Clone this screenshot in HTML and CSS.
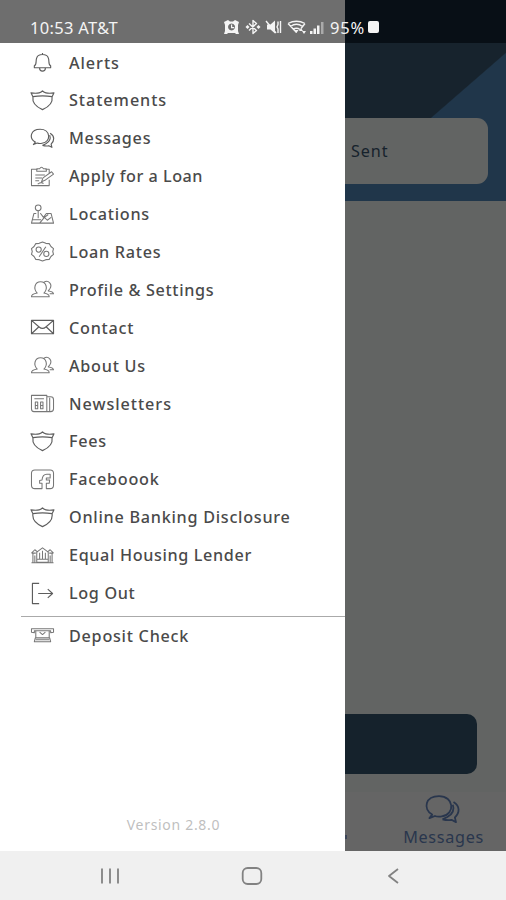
FILE: index.html
```html
<!DOCTYPE html>
<html lang="en">
<head>
    <meta charset="UTF-8">
    <meta name="viewport" content="width=device-width, initial-scale=1.0">
    <title>Mobile Banking</title>
    <link rel="stylesheet" href="styles.css">
</head>
<body>
    <!--shared icon shapes-->
    <svg class="icon-defs">
        <symbol id="shield" viewBox="0 0 26 24">
            <path d="M1 4q5 .8 8.500 0Q12 3.500 13 2q1 1.500 3.500 2Q20 4.800 25 4l-2 4c1 7-4 11-10 13.500C7 19 2 15 3 8zM3 8q10-1.500 20 0"/>
        </symbol>
        <symbol id="chat" viewBox="0 0 26 24">
            <path d="M5.500 15.700C-1.500 11.500.5 2.300 10.500 2.300C21.500 2.300 22.500 15.500 12.500 17Q9.500 17.500 7.500 16.700L3.500 18.300z"/>
            <path d="M21 6.500C26 9.500 25.500 14.500 22 17.800l.8 3.400-3.300-1.700Q17 20.200 13 19.200M20.500 8.500Q22.500 14 16.500 17.500l-3.500 1.700"/>
        </symbol>
        <symbol id="people" viewBox="0 0 26 24">
            <path d="M1.500 19.500Q1.500 16.800 7.500 15.700C3 11 5 4 11 4C17 4 19 11 14.500 15.700Q20 16.800 20 19.500zM14.500 4.500C19 1.500 24 6.500 20.500 11.500l-1.500 2Q24 14 24.500 16.500h-4"/>
        </symbol>
    </svg>

    <!--phone status bar-->
    <header class="status-bar">
        <span class="clock">10:53 AT&amp;T</span>
        <svg class="status-icons" viewBox="0 0 102 18">
            <path class="solid" fill-rule="evenodd" d="M1 4l4-2 2 1.500h3L12 2l4 2-1 3v6l1 3h-3l-1-1H5l-1 1H1l1-3V7zM8.500 5.500a3.500 3.500 0 1 0 .1 0zM8 6.500h1.200v2.500h2v1.200H8z"/>
            <path d="M26 5.500l7.500 7L30 15.500v-13l3.500 3-7.500 7"/>
            <path class="solid" d="M22.500 9l2-2 2 2-2 2zM33.500 9l2-2 2 2-2 2z"/>
            <path class="solid" d="M44 6.500h3.500L52 2.500v13l-4.500-4H44z"/>
            <path d="M43 3l10 12M55 3.500v3l-1 2.500 1 2v4M57.500 3v12"/>
            <path d="M65 5.500Q73.500 1 82 5.500M67.500 8.500Q73.500 4 79.500 8.500M70 11.500q3.500-2.500 7 0M65 5.500l8.500 9M82 5.500l-4 5"/>
            <path class="solid" d="M71.500 12h4L73.500 15zM76 13l2-3 2 3zM79 13h4l-2 3z"/>
            <path class="solid" d="M87 13h2.500v3H87zM90.500 10.500H93V16h-2.500zM94 7.500h2.500V16H94z"/>
            <path class="faint" d="M98 4h2.500v12H98z"/>
        </svg>
        <span class="battery-level">95%</span>
        <span class="battery"></span>
    </header>

    <main class="screen">
        <!--side menu-->
        <nav class="drawer">
            <ul class="menu">
                <li class="alerts"><svg class="icon" viewBox="0 0 26 24"><path d="M13 2v1.500M4.500 17.500v-2C7.500 14 5.500 10 7 7C8.500 2.500 17.500 2.500 19 7C20.500 10 18.500 14 21.500 15.500v2zM10 18q0 3 3 3t3-3"/></svg>Alerts</li>
                <li class="statements"><svg class="icon"><use href="#shield"/></svg>Statements</li>
                <li class="messages"><svg class="icon"><use href="#chat"/></svg>Messages</li>
                <li class="apply"><svg class="icon light" viewBox="0 0 26 24"><path d="M8 4.500H1.500v17H20v-6M16 4.500h4v4M7 6.500V4h3q2-3.500 4 0h3v2.500zM5.500 10.500h10M5.500 13.500h7M5.500 16.500h4M12 17.500l1.500-4 9-6.500 2 2.500-9 6.500zM8 20q4-3 6-.5"/></svg>Apply for a Loan</li>
                <li class="locations"><svg class="icon light" viewBox="0 0 26 24"><circle cx="8.500" cy="5" r="3"/><path d="M8.500 8v8M6.500 11H4L1.500 21h23L22 11h-5l-3 4-3-4h-.5M2.500 17.500h9M10 21l5-6 3 3 4-3M15 15l4-3"/></svg>Locations</li>
                <li class="rates"><svg class="icon light" viewBox="0 0 26 24"><path d="M13 2l3.500 1.500 3.500.3 1.800 3L24.500 9l-.8 3 .8 3-2.700 2.200-1.800 3-3.500.3L13 22l-3.500-1.500-3.500-.3-1.800-3L1.500 15l.8-3-.8-3 2.700-2.200 1.800-3 3.500-.3z"/><circle cx="9" cy="10" r="2.700"/><circle cx="17" cy="14.500" r="2.700"/><path d="M16.500 7l-7 10.500"/></svg>Loan Rates</li>
                <li class="profile"><svg class="icon light"><use href="#people"/></svg>Profile &amp; Settings</li>
                <li class="contact"><svg class="icon" viewBox="0 0 26 24"><path d="M1.500 4.500h23v14h-23zM1.500 4.500l8 7q3.500 3 7 0l8-7M1.500 18.500l7.500-7M24.500 18.500l-7.500-7"/></svg>Contact</li>
                <li class="about"><svg class="icon light"><use href="#people"/></svg>About Us</li>
                <li class="news"><svg class="icon light" viewBox="0 0 26 24"><path d="M1.500 3.500h16v17H4q-2.500 0-2.500-3zM17.500 5h4q3 0 3 3v9.500q0 3-3 3h-4M20.500 6v14M4.500 7h10M5.500 10.500h2.500v7H5.500zM11 10.500h2.500v7H11zM5.500 14H8M11 14h2.500"/></svg>Newsletters</li>
                <li class="fees"><svg class="icon"><use href="#shield"/></svg>Fees</li>
                <li class="facebook"><svg class="icon light" viewBox="0 0 26 24"><path d="M12.500 21.500H5q-3.500 0-3.500-3.500V5.500Q1.500 2 5 2h16q3.500 0 3.500 3.500V18q0 3.500-3.500 3.500h-4V16h3l.5-3.500H17v-2h4V6.500h-3.500q-4.500 0-5 6l-2.500.5V16h2.500z"/></svg>Faceboook</li>
                <li class="disclosure"><svg class="icon"><use href="#shield"/></svg>Online Banking Disclosure</li>
                <li class="lender"><svg class="icon light" viewBox="0 0 26 24"><path d="M7 8.500L13 4l6 4.500V19H7zM1.500 9.500L5 6l3 2.500M18 8.500L21 6l3.500 3.500M1.500 9.500H6M20 9.500h4.500M3 10v9M23 10v9M1.500 19.500h23M10 9v7M13 7v9M16 9v7M7 16h12M5 12v7M21 12v7"/></svg>Equal Housing Lender</li>
                <li class="logout"><svg class="icon" viewBox="0 0 26 24"><path d="M9.500 1.500h-7v21h7M8.500 12h15M18.500 7.500l5 4.500-5 4.500"/></svg>Log Out</li>
            </ul>
            <ul class="menu extra">
                <li class="deposit"><svg class="icon light" viewBox="0 0 26 24"><path d="M1.500 5h23v3.500l-3 .5V7h-17v2l-3-.5zM6 7v7.500h14V7M10 8.500l3 2.500 3-2.500M4.500 18.500l1-4h15l1 4zM6 16.500h14"/></svg>Deposit Check</li>
            </ul>
            <p class="version">Version 2.8.0</p>
        </nav>

        <!--dimmed page behind the menu-->
        <section class="page">
            <div class="banner">
                <div class="card">Sent</div>
            </div>
            <div class="action-button"></div>
            <div class="tab-bar">
                <span class="tab-edge"></span>
                <div class="tab">
                    <svg class="tab-icon"><use href="#chat"/></svg>
                    <span>Messages</span>
                </div>
            </div>
        </section>
    </main>

    <!--android navigation-->
    <footer class="nav-bar">
        <svg class="nav-icon" viewBox="0 0 24 24"><path d="M4 4.500v15M12 4.500v15M20 4.500v15"/></svg>
        <svg class="nav-icon" viewBox="0 0 24 24"><rect x="2.700" y="4" width="18.600" height="16" rx="5"/></svg>
        <svg class="nav-icon" viewBox="0 0 24 24"><path d="M17 5l-9 7 9 7"/></svg>
    </footer>
</body>
</html>
```
FILE: styles.css
```css
/*base layout*/
body {
    margin: 0;
    height: 900px;
    display: flex;
    flex-direction: column;
    overflow: hidden;
    background-color: #ffffff;
    color: #4a4a4a;
    font-family: "Noto Sans", "Open Sans", sans-serif;
}

svg {
    fill: none;
    stroke: currentColor;
    stroke-linejoin: round;
}

.icon-defs {
    display: none;
}

/*status bar*/
.status-bar {
    box-sizing: border-box;
    height: 43px;
    flex-shrink: 0;
    display: flex;
    align-items: center;
    padding: 11px 0 0 30px;
    background: linear-gradient(to right, #6e6e6e 345px, #080f16 345px);
    color: #f4f4f4;
    font-size: 16.5px;
}

.clock {
    width: 193px;
    letter-spacing: 0.3px;
}

.status-icons {
    width: 102px;
    height: 18px;
    stroke-width: 1.4;
}

.status-icons .solid {
    fill: currentColor;
    stroke: none;
}

.status-icons .faint {
    fill: #aaa;
    stroke: none;
}

.battery-level {
    width: 37px;
    margin-left: 5px;
    letter-spacing: 0.8px;
}

.battery {
    width: 11px;
    height: 12px;
    margin-left: 1px;
    border-radius: 2px;
    background-color: #f4f4f4;
}

.screen {
    display: flex;
    height: 808px;
    flex-shrink: 0;
}

/*side menu*/
.drawer {
    width: 345px;
    flex-shrink: 0;
    display: flex;
    flex-direction: column;
}

.menu {
    list-style: none;
    margin: 0;
    padding: 0.6px 0 0 30px;
}

.menu li {
    display: flex;
    align-items: center;
    gap: 14px;
    height: 37.9px;
    font-size: 16.2px;
    font-weight: 500;
    letter-spacing: 0.74px;
    white-space: nowrap;
}

/*labels with tighter or looser tracking*/
.menu .alerts,
.menu .statements,
.menu .news {
    letter-spacing: 0.95px;
}

.menu .apply {
    letter-spacing: 0.5px;
}

.menu .lender {
    letter-spacing: 0.64px;
}

.menu .profile,
.menu .logout {
    letter-spacing: 0.65px;
}

.menu.extra {
    margin: 3.900px 0 0 21px;
    padding: 0 0 0 9px;
    border-top: 1px solid #aaa;
}

.icon {
    width: 25px;
    height: 23px;
    color: #5d5d5d;
    stroke-width: 1.2;
}

.icon.light {
    color: #777;
    stroke-width: 1.1;
}

.version {
    margin: auto 0 16px;
    padding-left: 2px;
    text-align: center;
    font-size: 14px;
    line-height: 20px;
    letter-spacing: 0.7px;
    color: #bfbfbf;
}

/*page behind the menu*/
.page {
    flex: 1;
    display: flex;
    flex-direction: column;
    background-color: #626463;
    color: #16222c;
}

.banner {
    height: 158px;
    box-sizing: border-box;
    padding-top: 75px;
    background: linear-gradient(139deg, #17232d 50%, #20364a 50.5%) 0 0 / 161px 158px no-repeat;
    box-shadow: inset 0 -20px #20364a;
}

.card {
    box-sizing: border-box;
    width: 143px;
    height: 66px;
    padding-left: 6px;
    border-radius: 0 11px 11px 0;
    background-color: #626463;
    font-size: 16.2px;
    line-height: 67px;
    letter-spacing: 0.9px;
}

.action-button {
    width: 132px;
    height: 60px;
    margin-top: auto;
    border-radius: 0 10px 10px 0;
    background-color: #15222c;
}

.tab-bar {
    display: flex;
    justify-content: space-between;
    height: 59px;
    margin-top: 18px;
    background-color: #656565;
    color: #29364d;
}

.tab-edge {
    width: 2px;
    height: 4px;
    margin-top: 43px;
    background-color: #3b4558;
}

.tab {
    display: flex;
    flex-direction: column;
    align-items: center;
    padding: 1px 22px 0 0;
    font-size: 16.2px;
    line-height: 22px;
    letter-spacing: 0.7px;
}

.tab-icon {
    width: 37px;
    height: 33px;
    margin-right: 2px;
    stroke-width: 1.3;
}

/*android navigation*/
.nav-bar {
    flex: 1;
    display: flex;
    justify-content: space-between;
    align-items: center;
    padding: 0 101px 0 98px;
    background-color: #f0f0f0;
    color: #828282;
}

.nav-icon {
    width: 24px;
    height: 24px;
    stroke-width: 1.8;
}
```
